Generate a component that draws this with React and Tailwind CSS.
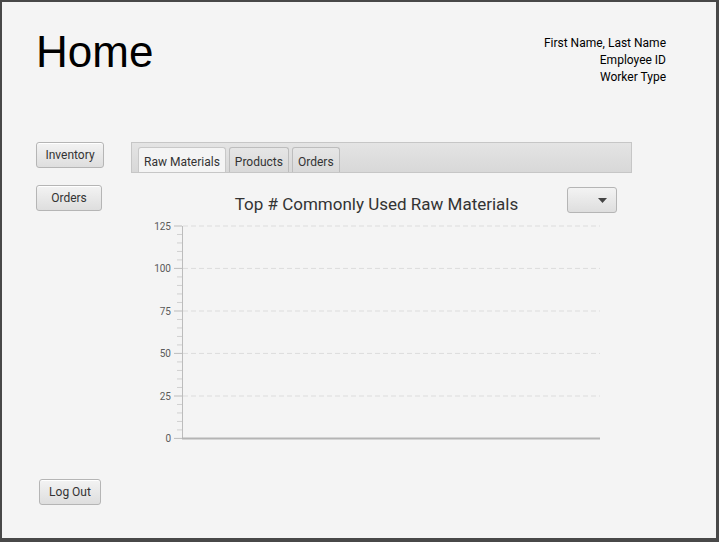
import React from "react";

const font = { fontFamily: "Roboto, 'Liberation Sans', sans-serif" };

function FxButton({ children, className = "" }) {
  return (
    <button
      className={`flex items-center justify-center rounded-[3px] border border-[#b5b5b5] bg-gradient-to-b from-[#f3f3f3] to-[#dedede] text-[12px] text-[#333] shadow-[inset_0_1px_0_#fff] ${className}`}
    >
      {children}
    </button>
  );
}

function Tab({ label, active }) {
  return (
    <div
      className={`flex h-[25px] items-center rounded-t-[3px] border border-b-0 px-[5px] pt-[3px] text-[12px] text-[#333] ${
        active
          ? "border-[#c8c8c8] bg-[#f4f4f4]"
          : "border-[#bdbdbd] bg-gradient-to-b from-[#e6e6e6] to-[#d9d9d9]"
      }`}
    >
      {label}
    </div>
  );
}

function Chart() {
  // svg origin is at page (131, 216)
  const ox = 131;
  const oy = 216;
  const ticks = [
    { v: 125, y: 226 },
    { v: 100, y: 268.4 },
    { v: 75, y: 311 },
    { v: 50, y: 353.4 },
    { v: 25, y: 396 },
    { v: 0, y: 438.4 },
  ];
  const minors = [];
  for (let i = 0; i < 5; i++) {
    const a = ticks[i].y;
    const b = ticks[i + 1].y;
    for (let k = 1; k < 5; k++) minors.push(a + ((b - a) * k) / 5);
  }
  return (
    <svg width="501" height="232" className="block">
      {ticks.slice(0, 5).map((t) => (
        <line
          key={t.v}
          x1={183 - ox}
          x2={600 - ox}
          y1={t.y - oy}
          y2={t.y - oy}
          stroke="#dcdcdc"
          strokeWidth="1"
          strokeDasharray="5 3"
        />
      ))}
      <line x1={182.5 - ox} x2={182.5 - ox} y1={226 - oy} y2={438 - oy} stroke="#bcbcbc" strokeWidth="1" />
      {ticks.map((t) => (
        <g key={"t" + t.v}>
          <line x1={174 - ox} x2={182 - ox} y1={t.y - oy} y2={t.y - oy} stroke="#bcbcbc" strokeWidth="1" />
          <text
            x={171 - ox}
            y={t.y - oy + 3.5}
            textAnchor="end"
            fontSize="10"
            fill="#5a5a5a"
            fontFamily="Roboto, 'Liberation Sans', sans-serif"
          >
            {t.v}
          </text>
        </g>
      ))}
      {minors.map((y, i) => (
        <line key={"m" + i} x1={177 - ox} x2={182 - ox} y1={y - oy} y2={y - oy} stroke="#d0d0d0" strokeWidth="1" />
      ))}
      <line x1={182 - ox} x2={600 - ox} y1={438.5 - oy} y2={438.5 - oy} stroke="#b4b4b4" strokeWidth="2" />
    </svg>
  );
}

export default function App() {
  return (
    <div className="h-[542px] w-[719px] bg-[#484848] pb-[4px] pl-[2px] pr-[3px] pt-[2px]" style={font}>
      <div className="flex h-full w-full flex-col bg-[#f4f4f4]">
        <div className="flex justify-between pl-[34px] pr-[50px] pt-[24px]">
          <div
            className="text-[44px] leading-[52px] text-black"
            style={{ fontFamily: "'Liberation Sans', Arial, sans-serif" }}
          >
            Home
          </div>
          <div className="pt-[9px] text-right text-[12px] leading-[17px] text-black">
            <div>First Name, Last Name</div>
            <div>Employee ID</div>
            <div>Worker Type</div>
          </div>
        </div>

        <div className="mt-[56px] flex">
          <div className="flex w-[129px] flex-col gap-[17px] pl-[34px]">
            <FxButton className="h-[26px] w-[68px]">Inventory</FxButton>
            <FxButton className="h-[26px] w-[66px]">Orders</FxButton>
          </div>

          <div className="w-[501px]">
            <div className="flex h-[31px] items-end gap-[3px] border border-[#c6c6c6] bg-gradient-to-b from-[#e4e4e4] to-[#d8d8d8] pl-[6px]">
              <Tab label="Raw Materials" active />
              <Tab label="Products" />
              <Tab label="Orders" />
            </div>
            <div className="mt-[14px] flex h-[26px] items-start">
              <div className="mt-[5px] w-[491px] text-center text-[17px] leading-[24px] text-[#333]">
                Top # Commonly Used Raw Materials
              </div>
              <div className="ml-[-55px] flex h-[26px] w-[50px] shrink-0 items-center justify-end rounded-[3px] border border-[#b5b5b5] bg-gradient-to-b from-[#f3f3f3] to-[#dedede] pr-[9px]">
                <svg width="9" height="5" viewBox="0 0 9 5">
                  <path d="M0 0 H9 L4.5 5 Z" fill="#444" />
                </svg>
              </div>
            </div>
            <div className="mt-[3px]">
              <Chart />
            </div>
          </div>
        </div>

        <div className="mt-auto pb-[33px] pl-[37px]">
          <FxButton className="h-[26px] w-[62px]">Log Out</FxButton>
        </div>
      </div>
    </div>
  );
}
